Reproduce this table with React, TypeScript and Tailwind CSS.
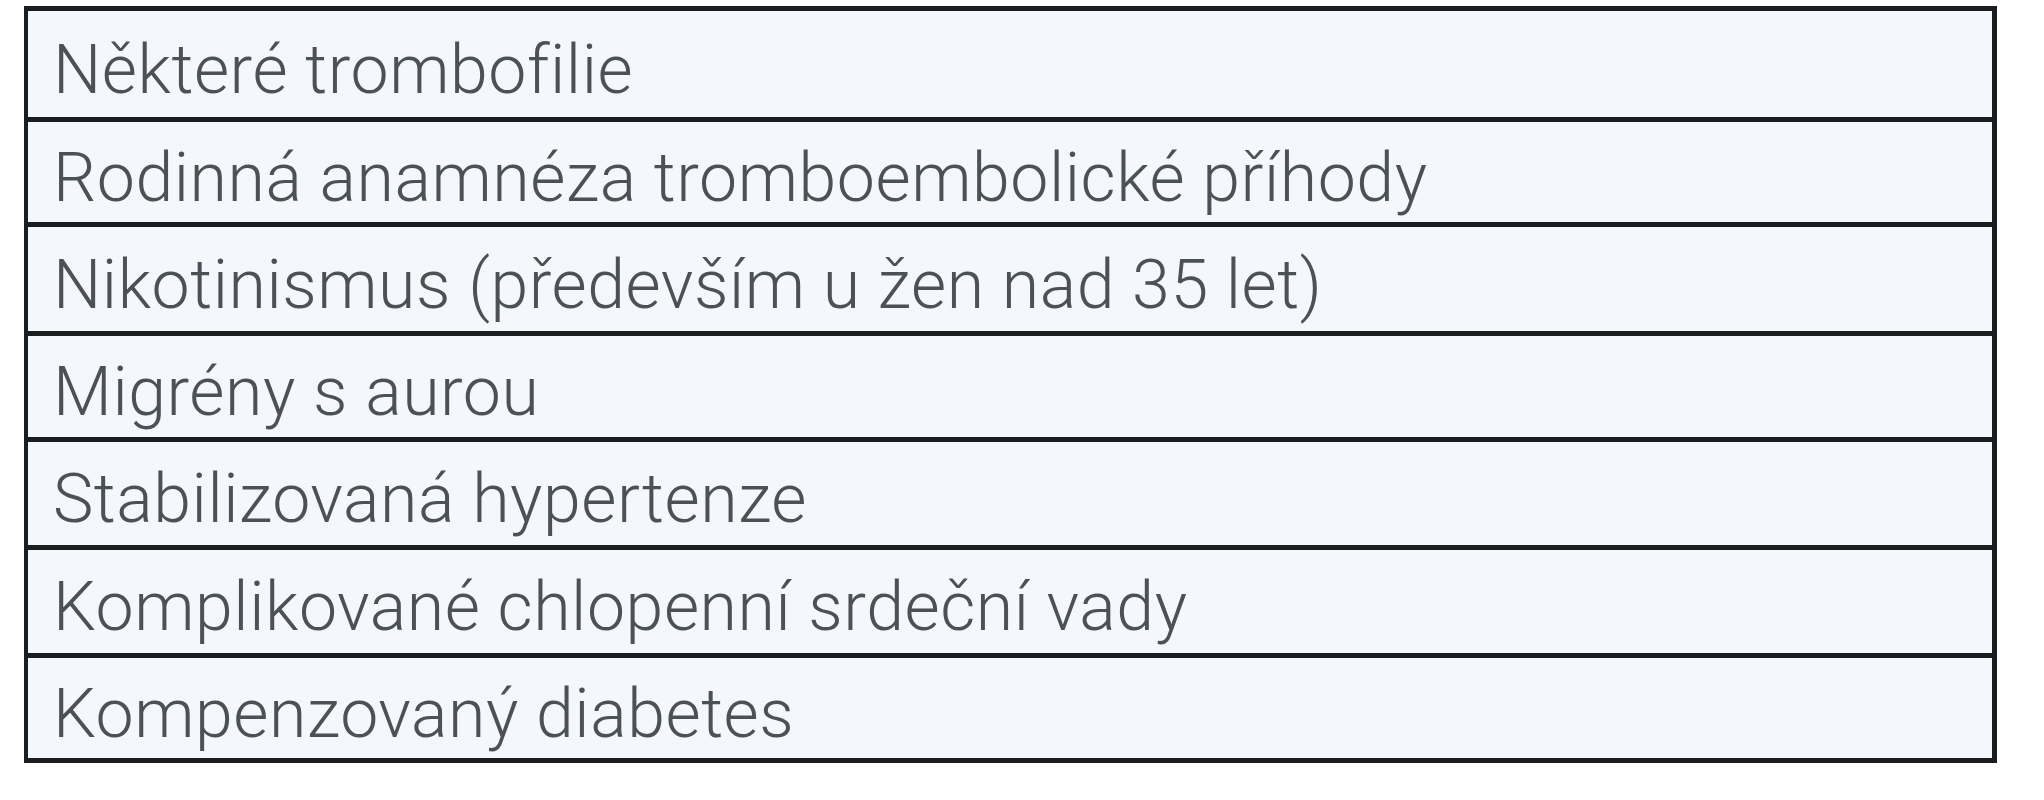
import React from "react";

const rows: { text: string; h: string }[] = [
  { text: "Některé trombofilie", h: "h-[106px]" },
  { text: "Rodinná anamnéza tromboembolické příhody", h: "h-[105px]" },
  { text: "Nikotinismus (především u žen nad 35 let)", h: "h-[109px]" },
  { text: "Migrény s aurou", h: "h-[106px]" },
  { text: "Stabilizovaná hypertenze", h: "h-[108px]" },
  { text: "Komplikované chlopenní srdeční vady", h: "h-[108px]" },
  { text: "Kompenzovaný diabetes", h: "h-[105px]" },
];

export default function App() {
  return (
    <div className="w-[2044px] h-[800px] bg-white pt-[6px] pl-[24px]">
      <div className="w-[1973px] border-[5px] border-[#1b1e21] border-l-4 bg-[#f4f7fc] flex flex-col">
        {rows.map((r, i) => (
          <div
            key={i}
            className={`${r.h} flex items-center pl-[25px] pt-[11px] ${i > 0 ? "border-t-[5px] border-[#1b1e21]" : ""}`}
          >
            <span
              className="text-[68px] font-light leading-none text-[#4c5158] tracking-[0.55px]"
              style={{ fontFamily: "Roboto, 'Liberation Sans', sans-serif" }}
            >
              {r.text}
            </span>
          </div>
        ))}
      </div>
    </div>
  );
}
